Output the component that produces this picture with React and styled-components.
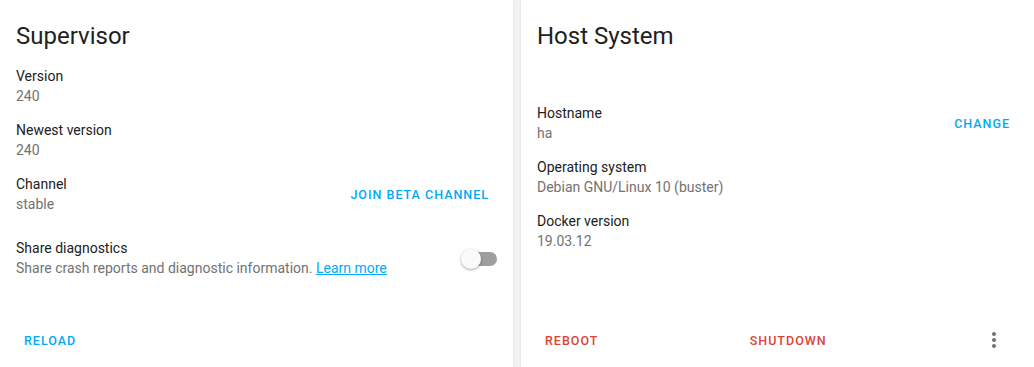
import React from 'react';
import styled, {createGlobalStyle} from 'styled-components';

const GlobalStyle = createGlobalStyle`
    html, body {
        margin: 0;
        padding: 0;
        background: #f2f2f2;
    }
    body {
        font-family: Roboto, 'Noto Sans', sans-serif;
        -webkit-font-smoothing: antialiased;
    }
`;

const Grid = styled.div`
    display: grid;
    grid-template-columns: 1fr 1fr;
    gap: 8px;
    height: 367px;
`;

const Card = styled.section`
    background: #fff;
    display: flex;
    flex-direction: column;
    box-shadow: 0 0 2px rgba(0, 0, 0, 0.12);
`;

const Content = styled.div`
    flex: 1;
    padding: 20px 16px 0;
    display: flex;
    flex-direction: column;
    gap: 14px;
`;

const Title = styled.h1`
    margin: 0 0 ${props => props.$extra || 0}px;
    font-size: 24px;
    line-height: 32px;
    font-weight: 400;
    color: #212121;
`;

const Row = styled.div`
    display: flex;
    justify-content: space-between;
    align-items: center;
    margin-top: ${props => props.$spaced ? 10 : 0}px;
`;

const Info = styled.div`
    display: flex;
    flex-direction: column;
    font-size: 14px;
    line-height: 20px;
`;

const Label = styled.span`
    color: #212121;
`;

const Value = styled.span`
    color: #727272;
`;

const Link = styled.a`
    color: #03a9f4;
    text-decoration: underline;
`;

const Button = styled.button`
    background: none;
    border: none;
    height: 36px;
    padding: 0 8px;
    font-family: Roboto, sans-serif;
    font-size: 12.5px;
    font-weight: 500;
    letter-spacing: 1px;
    text-transform: uppercase;
    color: ${props => props.$danger ? '#db4437' : '#03a9f4'};
    cursor: pointer;
`;

const Actions = styled.div`
    display: flex;
    justify-content: space-between;
    align-items: center;
    padding: 4px 16px 9px;
`;

const IconButton = styled.button`
    width: 48px;
    height: 36px;
    background: none;
    border: none;
    padding: 0;
    display: flex;
    align-items: center;
    justify-content: center;
    color: #727272;
`;

const Switch = styled.div`
    position: relative;
    width: 36px;
    height: 20px;
    margin-top: 2px;
    flex: none;
`;

const Track = styled.div`
    position: absolute;
    left: 2px;
    right: 0;
    top: 3px;
    height: 14px;
    border-radius: 7px;
    background: #9e9e9e;
`;

const Thumb = styled.div`
    position: absolute;
    left: 0;
    top: 0;
    width: 20px;
    height: 20px;
    border-radius: 50%;
    background: #fafafa;
    box-shadow: 0 1px 3px rgba(0, 0, 0, 0.35);
`;

const DotsIcon = () => (
    <svg width="24" height="24" viewBox="0 0 24 24" fill="currentColor">
        <circle cx="12" cy="6" r="2" />
        <circle cx="12" cy="12" r="2" />
        <circle cx="12" cy="18" r="2" />
    </svg>
);

const Item = ({label, children}) => (
    <Info>
        <Label>{label}</Label>
        <Value>{children}</Value>
    </Info>
);

const App = () => (
    <>
        <GlobalStyle />
        <Grid>
            <Card>
                <Content>
                    <Title>Supervisor</Title>
                    <Item label="Version">240</Item>
                    <Item label="Newest version">240</Item>
                    <Row>
                        <Item label="Channel">stable</Item>
                        <Button>Join beta channel</Button>
                    </Row>
                    <Row $spaced>
                        <Item label="Share diagnostics">
                            Share crash reports and diagnostic information.{' '}
                            <Link>Learn more</Link>
                        </Item>
                        <Switch>
                            <Track />
                            <Thumb />
                        </Switch>
                    </Row>
                </Content>
                <Actions>
                    <Button>Reload</Button>
                </Actions>
            </Card>
            <Card>
                <Content>
                    <Title $extra={37}>Host System</Title>
                    <Row>
                        <Item label="Hostname">ha</Item>
                        <Button>Change</Button>
                    </Row>
                    <Item label="Operating system">Debian GNU/Linux 10 (buster)</Item>
                    <Item label="Docker version">19.03.12</Item>
                </Content>
                <Actions>
                    <Button $danger>Reboot</Button>
                    <Button $danger>Shutdown</Button>
                    <IconButton><DotsIcon /></IconButton>
                </Actions>
            </Card>
        </Grid>
    </>
);

export default App;
